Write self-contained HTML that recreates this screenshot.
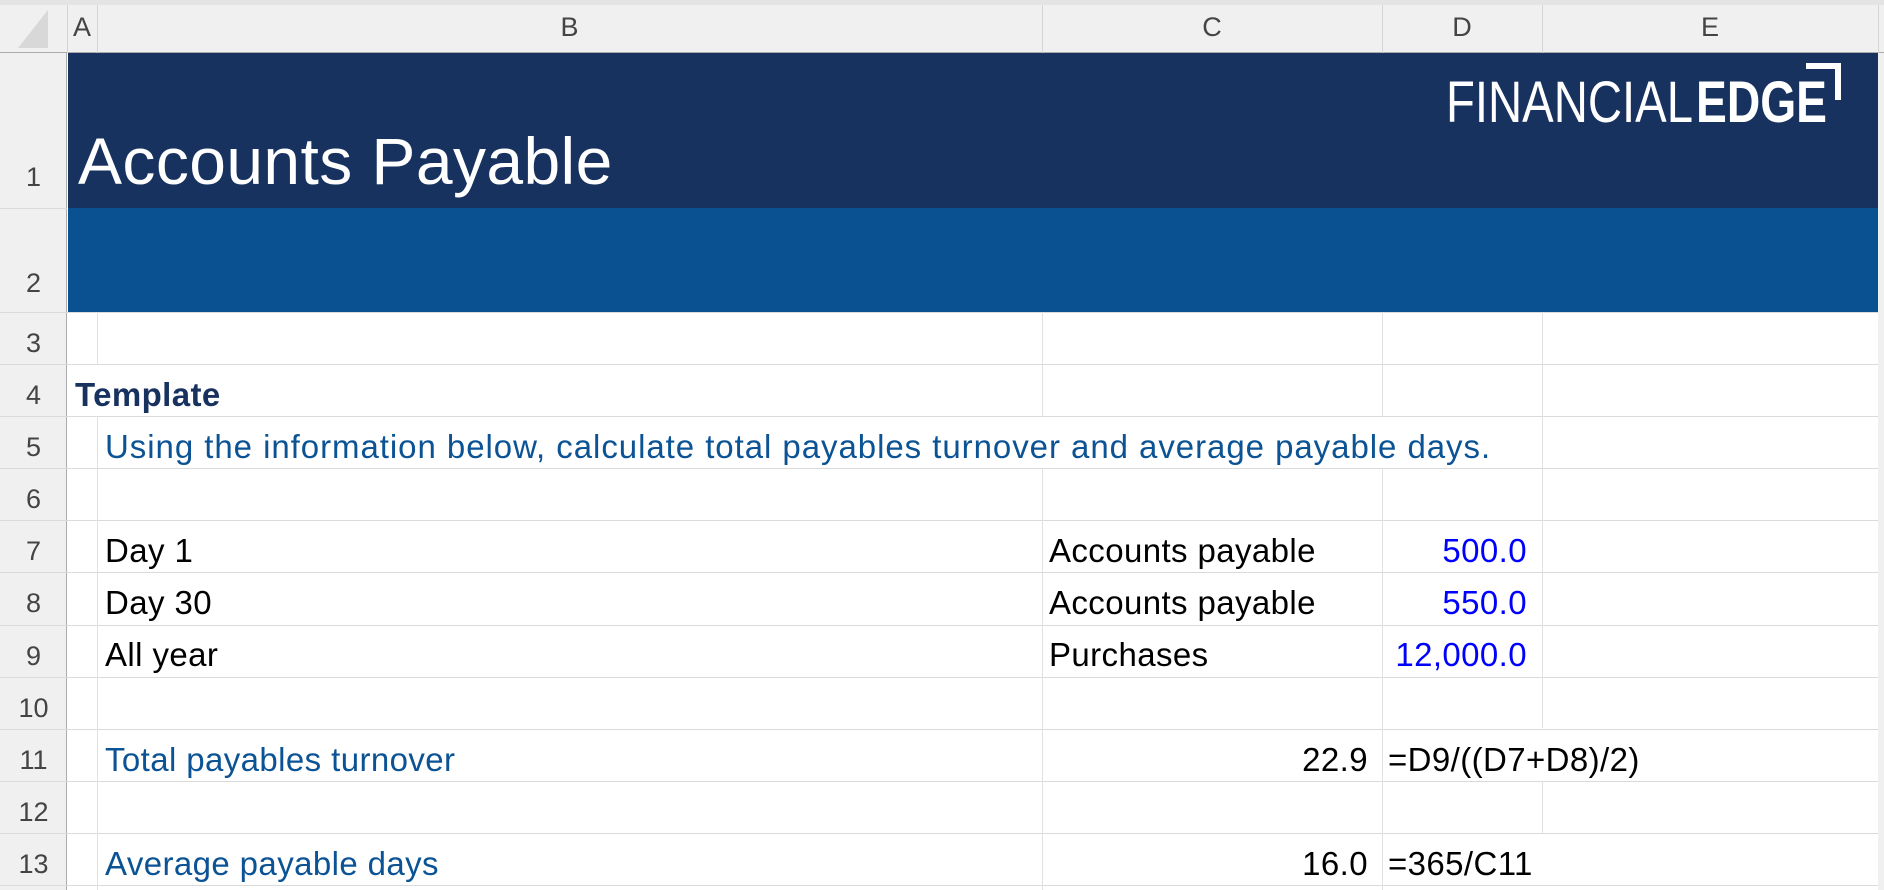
<!DOCTYPE html>
<html><head><meta charset="utf-8"><style>
*{margin:0;padding:0;box-sizing:border-box}
body{width:1884px;height:890px;overflow:hidden;background:#fff;position:relative;font-family:"Liberation Sans",sans-serif}
.a{position:absolute}
.hl{position:absolute;height:1px;background:#dadada}
.vl{position:absolute;width:1px;background:#e1e1e1}
.rh{position:absolute;left:0;width:67px;text-align:center;font-size:27px;color:#444;line-height:1}
.ch{position:absolute;top:14px;font-size:27px;color:#444;text-align:center;line-height:1}
.t{position:absolute;font-size:33px;line-height:1;white-space:nowrap;color:#000;letter-spacing:0.4px}
</style></head><body>
<div class="a" style="left:0;top:0;width:1884px;height:5px;background:#e4e4e4"></div>
<div class="a" style="left:0;top:5px;width:1884px;height:48px;background:#f0f0f0;border-bottom:1px solid #ababab"></div>
<svg class="a" style="left:16px;top:8px" width="34" height="42"><polygon points="32,2 32,40 2,40" fill="#d8d8d8"/></svg>
<div class="vl" style="left:67px;top:5px;height:48px;background:#d4d4d4"></div>
<div class="vl" style="left:97px;top:5px;height:48px;background:#d4d4d4"></div>
<div class="vl" style="left:1042px;top:5px;height:48px;background:#d4d4d4"></div>
<div class="vl" style="left:1382px;top:5px;height:48px;background:#d4d4d4"></div>
<div class="vl" style="left:1542px;top:5px;height:48px;background:#d4d4d4"></div>
<div class="vl" style="left:1878px;top:5px;height:48px;background:#d4d4d4"></div>
<div class="ch" style="left:67px;width:30px">A</div>
<div class="ch" style="left:97px;width:945px">B</div>
<div class="ch" style="left:1042px;width:340px">C</div>
<div class="ch" style="left:1382px;width:160px">D</div>
<div class="ch" style="left:1542px;width:336px">E</div>
<div class="a" style="left:0;top:53px;width:67px;height:837px;background:#f0f0f0;border-right:1px solid #ababab"></div>
<div class="a" style="left:1878px;top:53px;width:6px;height:837px;background:#f0f0f0"></div>
<div class="a" style="left:68px;top:53px;width:1810px;height:155px;background:#183260"></div>
<div class="a" style="left:68px;top:208px;width:1810px;height:104px;background:#0a5192"></div>
<div class="t" style="left:78px;top:128px;font-size:66px;color:#fff;letter-spacing:0.4px">Accounts Payable</div>
<svg class="a" style="left:1440px;top:60px" width="410" height="70">
<text x="6" y="62" font-family="Liberation Sans" font-size="58" fill="#fff" textLength="247" lengthAdjust="spacingAndGlyphs">FINANCIAL</text>
<text x="256" y="62" font-family="Liberation Sans" font-size="58" font-weight="bold" fill="#fff" textLength="131" lengthAdjust="spacingAndGlyphs">EDGE</text>
<polyline points="366,6 398,6 398,40" fill="none" stroke="#fff" stroke-width="6"/>
</svg>
<div class="hl" style="left:0;top:208px;width:67px"></div>
<div class="hl" style="left:0;top:312px;width:1878px"></div>
<div class="hl" style="left:0;top:364px;width:1878px"></div>
<div class="hl" style="left:0;top:416px;width:1878px"></div>
<div class="hl" style="left:0;top:468px;width:1878px"></div>
<div class="hl" style="left:0;top:520px;width:1878px"></div>
<div class="hl" style="left:0;top:572px;width:1878px"></div>
<div class="hl" style="left:0;top:625px;width:1878px"></div>
<div class="hl" style="left:0;top:677px;width:1878px"></div>
<div class="hl" style="left:0;top:729px;width:1878px"></div>
<div class="hl" style="left:0;top:781px;width:1878px"></div>
<div class="hl" style="left:0;top:833px;width:1878px"></div>
<div class="hl" style="left:0;top:885px;width:1878px"></div>
<div class="vl" style="left:97px;top:312px;height:52px"></div>
<div class="vl" style="left:97px;top:416px;height:474px"></div>
<div class="vl" style="left:1042px;top:312px;height:104px"></div>
<div class="vl" style="left:1042px;top:468px;height:422px"></div>
<div class="vl" style="left:1382px;top:312px;height:104px"></div>
<div class="vl" style="left:1382px;top:468px;height:422px"></div>
<div class="vl" style="left:1542px;top:312px;height:416px"></div>
<div class="vl" style="left:1542px;top:781px;height:52px"></div>
<div class="rh" style="top:164px">1</div>
<div class="rh" style="top:270px">2</div>
<div class="rh" style="top:330px">3</div>
<div class="rh" style="top:382px">4</div>
<div class="rh" style="top:434px">5</div>
<div class="rh" style="top:486px">6</div>
<div class="rh" style="top:538px">7</div>
<div class="rh" style="top:590px">8</div>
<div class="rh" style="top:643px">9</div>
<div class="rh" style="top:695px">10</div>
<div class="rh" style="top:747px">11</div>
<div class="rh" style="top:799px">12</div>
<div class="rh" style="top:851px">13</div>
<div class="t" style="left:75px;top:378px;font-weight:bold;color:#183260">Template</div>
<div class="t" style="left:105px;top:430px;color:#0b5394;letter-spacing:0.95px">Using the information below, calculate total payables turnover and average payable days.</div>
<div class="t" style="left:105px;top:534px">Day 1</div>
<div class="t" style="left:105px;top:586px">Day 30</div>
<div class="t" style="left:105px;top:638px">All year</div>
<div class="t" style="left:1049px;top:534px">Accounts payable</div>
<div class="t" style="left:1049px;top:586px">Accounts payable</div>
<div class="t" style="left:1049px;top:638px">Purchases</div>
<div class="t" style="left:1382px;width:145px;text-align:right;top:534px;color:#0000ff">500.0</div>
<div class="t" style="left:1382px;width:145px;text-align:right;top:586px;color:#0000ff">550.0</div>
<div class="t" style="left:1352px;width:175px;text-align:right;top:638px;color:#0000ff">12,000.0</div>
<div class="t" style="left:105px;top:743px;color:#0b5394">Total payables turnover</div>
<div class="t" style="left:1042px;width:326px;text-align:right;top:743px">22.9</div>
<div class="t" style="left:1388px;top:743px">=D9/((D7+D8)/2)</div>
<div class="t" style="left:105px;top:847px;color:#0b5394">Average payable days</div>
<div class="t" style="left:1042px;width:326px;text-align:right;top:847px">16.0</div>
<div class="t" style="left:1388px;top:847px">=365/C11</div>
</body></html>
